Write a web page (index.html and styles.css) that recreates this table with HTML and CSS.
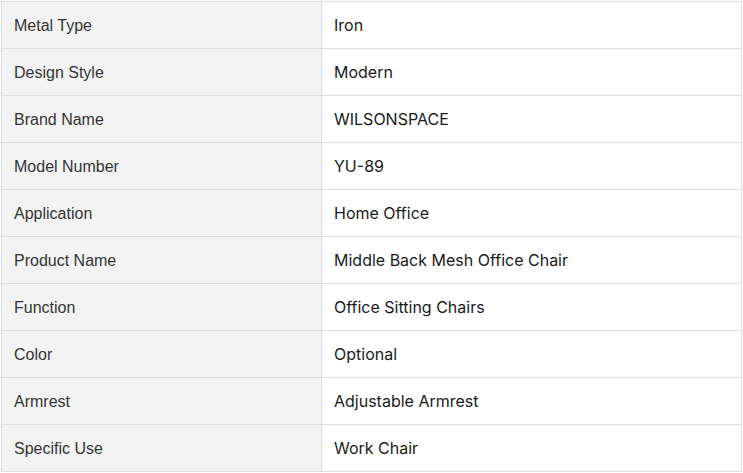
FILE: index.html
```html
<!DOCTYPE html>
<html>
<head>
<meta charset="utf-8">
<link rel="stylesheet" href="styles.css">
</head>
<body>
<div class="wrap">
<table class="spec">
<tr><th>Metal Type</th><td>Iron</td></tr>
<tr><th>Design Style</th><td>Modern</td></tr>
<tr><th>Brand Name</th><td>WILSONSPACE</td></tr>
<tr><th>Model Number</th><td>YU-89</td></tr>
<tr><th>Application</th><td>Home Office</td></tr>
<tr><th>Product Name</th><td>Middle Back Mesh Office Chair</td></tr>
<tr><th>Function</th><td>Office Sitting Chairs</td></tr>
<tr><th>Color</th><td>Optional</td></tr>
<tr><th>Armrest</th><td>Adjustable Armrest</td></tr>
<tr><th>Specific Use</th><td>Work Chair</td></tr>
</table>
</div>
</body>
</html>
```
FILE: styles.css
```css
html, body { margin: 0; padding: 0; background: #fff; }
.wrap { padding: 1px; }
.spec {
  border-collapse: collapse;
  width: 741px;
  font-size: 16px;
  table-layout: fixed;
}
.spec th, .spec td {
  border: 1px solid #dddddd;
  height: 47px;
  padding: 0 0 0 12px;
  text-align: left;
  vertical-align: middle;
  box-sizing: border-box;
}
.spec th {
  width: 320px;
  padding-top: 2px;
  background: #f3f3f3;
  font-family: "Liberation Sans", Arial, sans-serif;
  font-weight: 400;
  color: #333;
}
.spec td {
  font-family: Inter, "Liberation Sans", sans-serif;
  color: #1a1a1a;
  font-weight: 400;
}
```
